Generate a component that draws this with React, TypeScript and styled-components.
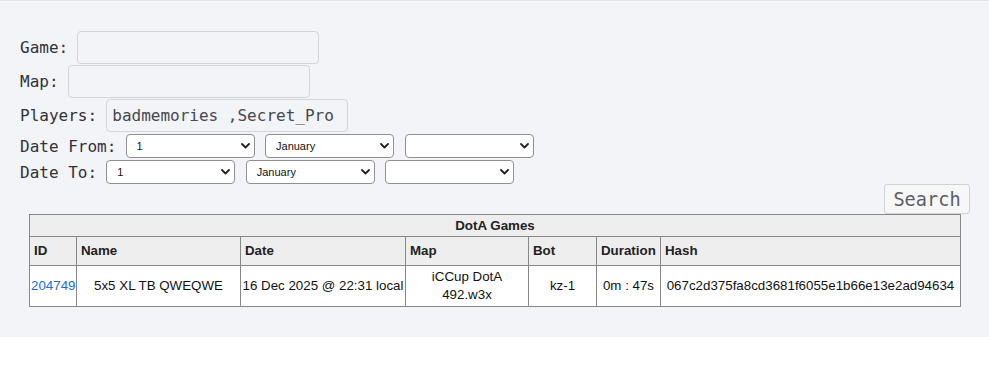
import React from "react";
import styled, { createGlobalStyle } from "styled-components";

const GlobalStyle = createGlobalStyle`
  html, body { margin: 0; padding: 0; background: #ffffff; }
  * { box-sizing: border-box; }
`;

const Page = styled.div`
  background: #f3f4f7;
  border-top: 1px solid #e4e6ea;
  padding: 30px 19px 30px 20px;
  display: flex;
  flex-direction: column;
  font-family: "DejaVu Sans Mono", "Liberation Mono", monospace;
  color: #333;
`;

const Row = styled.div<{ $h: number; $mt?: number }>`
  display: flex;
  align-items: center;
  height: ${(p) => p.$h}px;
  margin-top: ${(p) => p.$mt ?? 0}px;
`;

const Label = styled.label`
  font-size: 16px;
  line-height: 19px;
  margin-right: 9.2px;
  white-space: nowrap;
  color: #2f3237;
`;

const TextInput = styled.input`
  width: 242px;
  height: 33px;
  border: 1px solid #d3d5d9;
  border-radius: 4px;
  background: #f3f4f7;
  padding: 0 5px;
  font-family: "DejaVu Sans Mono", "Liberation Mono", monospace;
  font-size: 16px;
  color: #45484d;
  outline: none;
`;

const SelectWrap = styled.div`
  position: relative;
  width: 129px;
  height: 24px;
  margin-right: 10.5px;
`;

const Select = styled.select`
  appearance: none;
  -webkit-appearance: none;
  width: 100%;
  height: 100%;
  border: 1px solid #8f8f8f;
  border-radius: 4px;
  background: #ffffff;
  padding: 0 20px 0 10px;
  font-family: "Liberation Sans", Arial, sans-serif;
  font-size: 11px;
  color: #111;
  outline: none;
`;

const Chevron = styled.svg`
  position: absolute;
  right: 5px;
  top: 9px;
  pointer-events: none;
`;

const ButtonRow = styled.div`
  display: flex;
  justify-content: flex-end;
  height: 30px;
`;

const SearchButton = styled.button`
  height: 30px;
  width: 86px;
  border: 1px solid #cfd1d5;
  border-radius: 3px;
  background: #f7f7f8;
  font-family: "DejaVu Sans Mono", "Liberation Mono", monospace;
  font-size: 18.6px;
  color: #5a5d62;
  padding: 0;
`;

const Table = styled.table`
  width: 931px;
  margin: 0 auto;
  border-collapse: collapse;
  table-layout: fixed;
  border: 1px solid #888;
  font-family: "Liberation Sans", Arial, sans-serif;
  font-size: 13.33px;
  color: #111;
`;

const CaptionCell = styled.th`
  background: #eeeeee;
  border: 1px solid #888;
  padding: 3px 4px;
  line-height: 15px;
  font-weight: bold;
  text-align: center;
  color: #222;
`;

const HeadCell = styled.th`
  background: #eeeeee;
  border: 1px solid #888;
  padding: 6px 4px;
  line-height: 16px;
  font-weight: bold;
  text-align: left;
  color: #222;
`;

const Cell = styled.td<{ $align?: string; $wrap?: boolean }>`
  background: #ffffff;
  border: 1px solid #888;
  padding: 2px 1px;
  line-height: 18px;
  text-align: ${(p) => p.$align ?? "center"};
  white-space: ${(p) => (p.$wrap ? "normal" : "nowrap")};
  overflow: hidden;
`;

const GameLink = styled.a`
  color: #1a6fd1;
  text-decoration: none;
`;

const ChevronIcon = () => (
  <Chevron width="9" height="6" viewBox="0 0 9 6">
    <path d="M1 1 L4.5 4.5 L8 1" fill="none" stroke="#222" strokeWidth="1.8" strokeLinecap="round" strokeLinejoin="round" />
  </Chevron>
);

const DateSelects = () => (
  <>
    <SelectWrap>
      <Select defaultValue="1">
        <option value="1">1</option>
      </Select>
      <ChevronIcon />
    </SelectWrap>
    <SelectWrap>
      <Select defaultValue="January">
        <option value="January">January</option>
      </Select>
      <ChevronIcon />
    </SelectWrap>
    <SelectWrap>
      <Select defaultValue="">
        <option value=""></option>
      </Select>
      <ChevronIcon />
    </SelectWrap>
  </>
);

const columns = [
  { name: "ID", width: 47 },
  { name: "Name", width: 164 },
  { name: "Date", width: 165 },
  { name: "Map", width: 123 },
  { name: "Bot", width: 68 },
  { name: "Duration", width: 64 },
  { name: "Hash", width: 300 },
];

export default function App() {
  return (
    <>
      <GlobalStyle />
      <Page>
        <Row $h={33}>
          <Label>Game:</Label>
          <TextInput defaultValue="" />
        </Row>
        <Row $h={33} $mt={1}>
          <Label>Map:</Label>
          <TextInput defaultValue="" />
        </Row>
        <Row $h={33} $mt={1}>
          <Label>Players:</Label>
          <TextInput defaultValue="badmemories ,Secret_Pro" />
        </Row>
        <Row $h={24} $mt={2}>
          <Label>Date From:</Label>
          <DateSelects />
        </Row>
        <Row $h={24} $mt={2}>
          <Label>Date To:</Label>
          <DateSelects />
        </Row>
        <ButtonRow>
          <SearchButton>Search</SearchButton>
        </ButtonRow>
        <Table>
          <colgroup>
            {columns.map((c) => (
              <col key={c.name} style={{ width: c.width }} />
            ))}
          </colgroup>
          <thead>
            <tr>
              <CaptionCell colSpan={7}>DotA Games</CaptionCell>
            </tr>
            <tr>
              {columns.map((c) => (
                <HeadCell key={c.name}>{c.name}</HeadCell>
              ))}
            </tr>
          </thead>
          <tbody>
            <tr>
              <Cell $align="left">
                <GameLink href="#">204749</GameLink>
              </Cell>
              <Cell>5x5 XL TB QWEQWE</Cell>
              <Cell>16 Dec 2025 @ 22:31 local</Cell>
              <Cell $wrap>iCCup DotA 492.w3x</Cell>
              <Cell>kz-1</Cell>
              <Cell>0m : 47s</Cell>
              <Cell>067c2d375fa8cd3681f6055e1b66e13e2ad94634</Cell>
            </tr>
          </tbody>
        </Table>
      </Page>
    </>
  );
}
